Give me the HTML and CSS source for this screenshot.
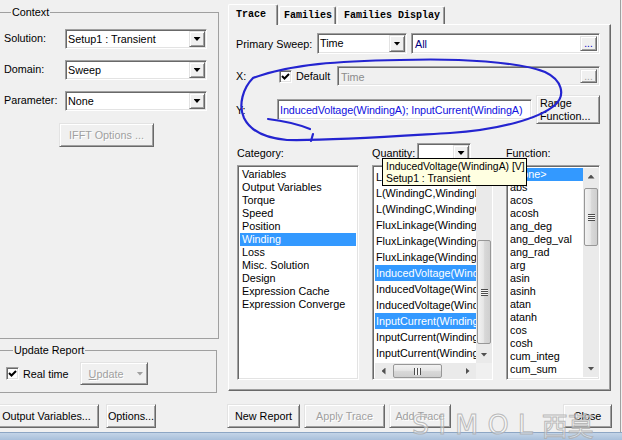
FILE: index.html
```html
<!DOCTYPE html>
<html lang="en">
<head>
    <meta charset="UTF-8">
    <meta name="viewport" content="width=device-width, initial-scale=1.0">
    <title>Report: Traces</title>
    <link rel="stylesheet" href="styles.css">
</head>
<body>
<div class="window">
    <div class="dialog">
        <div class="left-col">
            <fieldset class="group context-group">
                <legend>Context</legend>
                <div class="form-grid">
                    <span>Solution:</span>
                    <div class="combo sunken"><span class="combo-text">Setup1 : Transient</span><span class="drop-btn raised"></span></div>
                    <span>Domain:</span>
                    <div class="combo sunken"><span class="combo-text">Sweep</span><span class="drop-btn raised"></span></div>
                    <span>Parameter:</span>
                    <div class="combo sunken"><span class="combo-text">None</span><span class="drop-btn raised"></span></div>
                </div>
                <button class="btn raised ifft-btn" disabled>IFFT Options ...</button>
            </fieldset>

            <fieldset class="group update-group">
                <legend>Update Report</legend>
                <div class="update-row">
                    <span class="checkbox sunken"><svg width="9" height="9" viewBox="0 0 9 9"><polyline points="1,4 3.5,6.5 8,2" fill="none" stroke="#000" stroke-width="2"/></svg></span>
                    <span class="check-label">Real time</span>
                    <button class="btn raised update-btn" disabled><span><u>U</u>pdate</span><span class="arrow-down grey"></span></button>
                </div>
            </fieldset>

            <div class="left-buttons">
                <button class="btn raised output-btn">Output Variables...</button>
                <button class="btn raised options-btn">Options...</button>
            </div>
        </div>

        <div class="right-col">
            <div class="tabs">
                <div class="tab tab-active">Trace</div>
                <div class="tab tab-families">Families</div>
                <div class="tab tab-display">Families Display</div>
            </div>

            <div class="tab-panel">
                <div class="row sweep-row">
                    <span class="sweep-label">Primary Sweep:</span>
                    <div class="combo sunken sweep-combo"><span class="combo-text">Time</span><span class="drop-btn raised"></span></div>
                    <div class="field sunken all-field"><span class="field-text navy">All</span><span class="dots-btn raised">...</span></div>
                </div>

                <div class="row x-row">
                    <span class="x-label">X:</span>
                    <span class="checkbox sunken"><svg width="9" height="9" viewBox="0 0 9 9"><polyline points="1,4 3.5,6.5 8,2" fill="none" stroke="#000" stroke-width="2"/></svg></span>
                    <span class="check-label">Default</span>
                    <div class="field sunken field-disabled x-field"><span class="field-text">Time</span><span class="dots-btn raised dots-disabled">...</span></div>
                </div>

                <div class="row y-row">
                    <span class="y-label">Y:</span>
                    <div class="field sunken y-field"><span class="field-text blue">InducedVoltage(WindingA); InputCurrent(WindingA)</span></div>
                    <button class="btn raised range-btn">Range<br>Function...</button>
                </div>

                <div class="lists">
                    <div class="list-col category-col">
                        <div class="list-head">Category:</div>
                        <div class="list sunken">
                            <div class="items">
                                <div class="item">Variables</div>
                                <div class="item">Output Variables</div>
                                <div class="item">Torque</div>
                                <div class="item">Speed</div>
                                <div class="item">Position</div>
                                <div class="item selected">Winding</div>
                                <div class="item">Loss</div>
                                <div class="item">Misc. Solution</div>
                                <div class="item">Design</div>
                                <div class="item">Expression Cache</div>
                                <div class="item">Expression Converge</div>
                            </div>
                        </div>
                    </div>

                    <div class="list-col quantity-col">
                        <div class="list-head">
                            <span class="quantity-label">Quantity:</span>
                            <div class="combo sunken quantity-combo"><span class="combo-text"></span><span class="drop-btn raised"></span></div>
                        </div>
                        <div class="list sunken quantity-list">
                            <div class="items tall-items">
                                <div class="item">L(WindingC,WindingA)</div>
                                <div class="item">L(WindingC,WindingB)</div>
                                <div class="item">L(WindingC,WindingC)</div>
                                <div class="item">FluxLinkage(WindingA)</div>
                                <div class="item">FluxLinkage(WindingB)</div>
                                <div class="item">FluxLinkage(WindingC)</div>
                                <div class="item selected">InducedVoltage(WindingA)</div>
                                <div class="item">InducedVoltage(WindingB)</div>
                                <div class="item">InducedVoltage(WindingC)</div>
                                <div class="item selected">InputCurrent(WindingA)</div>
                                <div class="item">InputCurrent(WindingB)</div>
                                <div class="item">InputCurrent(WindingC)</div>
                            </div>
                            <div class="vscroll">
                                <span class="sb-btn"><span class="arrow-up"></span></span>
                                <span class="sb-gap q-gap"></span>
                                <span class="thumb q-thumb"><span class="grip"></span></span>
                                <span class="sb-fill"></span>
                                <span class="sb-btn"><span class="arrow-down"></span></span>
                            </div>
                            <div class="hscroll">
                                <span class="sb-btn"><span class="arrow-left"></span></span>
                                <span class="thumb h-thumb"><span class="grip-v"></span></span>
                                <span class="sb-fill"></span>
                                <span class="sb-btn"><span class="arrow-right"></span></span>
                            </div>
                            <div class="sb-corner"></div>
                        </div>
                    </div>

                    <div class="list-col function-col">
                        <div class="list-head">Function:</div>
                        <div class="list sunken function-list">
                            <div class="items">
                                <div class="item selected">&lt;none&gt;</div>
                                <div class="item">abs</div>
                                <div class="item">acos</div>
                                <div class="item">acosh</div>
                                <div class="item">ang_deg</div>
                                <div class="item">ang_deg_val</div>
                                <div class="item">ang_rad</div>
                                <div class="item">arg</div>
                                <div class="item">asin</div>
                                <div class="item">asinh</div>
                                <div class="item">atan</div>
                                <div class="item">atanh</div>
                                <div class="item">cos</div>
                                <div class="item">cosh</div>
                                <div class="item">cum_integ</div>
                                <div class="item">cum_sum</div>
                                <div class="item">dB</div>
                            </div>
                            <div class="vscroll">
                                <span class="sb-btn"><span class="arrow-up"></span></span>
                                <span class="sb-gap f-gap"></span>
                                <span class="thumb f-thumb"><span class="grip"></span></span>
                                <span class="sb-fill"></span>
                                <span class="sb-btn"><span class="arrow-down"></span></span>
                            </div>
                        </div>
                    </div>
                </div>
            </div>

            <div class="bottom-buttons">
                <button class="btn raised new-btn">New Report</button>
                <button class="btn raised apply-btn" disabled>Apply Trace</button>
                <button class="btn raised add-btn" disabled>Add Trace</button>
                <button class="btn raised close-btn">Close</button>
            </div>
        </div>

        <div class="frame-right"></div>
    </div>
    <div class="frame-bottom"></div>

    <div class="tooltip">
        <div>InducedVoltage(WindingA) [V]</div>
        <div>Setup1 : Transient</div>
    </div>

    <svg class="ink" width="622" height="440" viewBox="0 0 622 440">
        <path d="M 253 78 C 243 88, 238 105, 244 118 C 250 130, 262 138, 287 140 C 330 141, 400 136, 450 133 C 500 130, 540 118, 555 105 C 566 95, 562 80, 545 72 C 520 62, 460 58, 400 60 C 340 61, 290 64, 253 78" />
        <path d="M 268 119 C 285 121, 300 125, 310 129" />
        <path d="M 311 141 L 313 134" />
    </svg>

    <div class="watermark"><span class="wm-latin">SIMOL</span><span class="wm-cjk">西莫</span></div>
</div>
</body>
</html>
```

FILE: styles.css
```css
* {
    box-sizing: border-box;
}
body {
    margin: 0;
    width: 622px;
    height: 440px;
    overflow: hidden;
    background-color: #f0f0f0;
    font-family: "Liberation Sans", Arial, sans-serif;
    font-size: 10.8px;
    color: #000;
}
.window {
    position: relative;
    display: flex;
    flex-direction: column;
    height: 440px;
}
.dialog {
    display: flex;
    height: 432px;
}
.frame-bottom {
    height: 8px;
    background: linear-gradient(#c3d4e7, #a9c0db);
    border-top: 1px solid #8da6c4;
}
.frame-right {
    width: 10px;
    border-right: 1px solid #a0a0a0;
}

/* 3D edges */
.sunken {
    border: 1px solid;
    border-color: #a0a0a0 #fff #fff #a0a0a0;
    box-shadow: inset 1px 1px 0 #696969, inset -1px -1px 0 #e3e3e3;
    background-color: #fff;
}
.raised {
    border: 1px solid;
    border-color: #e3e3e3 #696969 #696969 #e3e3e3;
    box-shadow: inset 1px 1px 0 #fff, inset -1px -1px 0 #a0a0a0;
    background-color: #f0f0f0;
}
.btn {
    font-family: inherit;
    font-size: inherit;
    color: #000;
    padding: 0;
    margin: 0;
    height: 24px;
}
.btn:disabled {
    color: #a0a0a0;
    text-shadow: 1px 1px 0 #fff;
}

/* group boxes */
.group {
    margin: 0;
    padding: 0;
    min-width: 0;
    border: 1px solid #a0a0a0;
}
.group legend {
    padding: 0 1px;
    margin-left: 7px;
    line-height: 13px;
}
.left-col {
    width: 234px;
    margin-left: -6px;
    display: flex;
    flex-direction: column;
}
.context-group {
    margin: 6px 0 0 1px;
    width: 224px;
    height: 333px;
    padding: 10px 0 0 8px;
}
.form-grid {
    display: grid;
    grid-template-columns: 61px 142px;
    grid-auto-rows: 20px;
    row-gap: 11px;
    align-items: center;
}
.form-grid > span {
    padding-bottom: 3px;
}
.combo {
    display: flex;
    height: 20px;
    padding: 1px;
}
.combo-text {
    flex: 1;
    line-height: 16px;
    padding-left: 1px;
    overflow: hidden;
    white-space: nowrap;
}
.drop-btn {
    width: 16px;
    display: flex;
    align-items: center;
    justify-content: center;
}
.drop-btn::after {
    content: "";
    width: 7px;
    height: 4px;
    background-color: #000;
    clip-path: polygon(0 0, 100% 0, 50% 100%);
}
.ifft-btn {
    margin: 12px 0 0 55px;
    width: 95px;
}
.update-group {
    margin: 5px 0 0 1px;
    width: 222px;
    height: 49px;
    padding: 5px 0 0 10px;
}
.update-row {
    display: flex;
    align-items: center;
}
.checkbox {
    width: 13px;
    height: 13px;
    display: flex;
    align-items: center;
    justify-content: center;
}
.check-label {
    margin-left: 4px;
}
.update-btn {
    margin-left: 11px;
    width: 68px;
    height: 23px;
    display: flex;
    align-items: center;
    padding-left: 8px;
    gap: 13px;
}
.arrow-down.grey {
    background-color: #a0a0a0;
}
.left-buttons {
    display: flex;
    gap: 7px;
    margin-top: 11px;
}
.output-btn {
    width: 105px;
}
.options-btn {
    width: 50px;
}

/* right side */
.right-col {
    width: 383px;
    display: flex;
    flex-direction: column;
}
.tabs {
    display: flex;
    align-items: flex-end;
    height: 25px;
    margin-bottom: -1px;
    position: relative;
    z-index: 1;
}
.tab {
    font-family: "Liberation Mono", "DejaVu Sans Mono", monospace;
    font-weight: bold;
    font-size: 10px;
    height: 18px;
    margin-bottom: 1px;
    display: flex;
    align-items: center;
    border: 1px solid;
    border-bottom: none;
    border-color: #fff #696969 #696969 #fff;
    border-radius: 2px 2px 0 0;
    box-shadow: inset -1px 0 0 #a0a0a0;
    background-color: #f0f0f0;
}
.tab-active {
    width: 50px;
    height: 21px;
    margin-bottom: 0;
    padding: 0 0 2px 7px;
}
.tab-families {
    width: 57px;
    margin-left: 1px;
    padding-left: 4px;
}
.tab-display {
    width: 108px;
    margin-left: 1px;
    padding-left: 6px;
}
.tab-panel {
    height: 367px;
    border: 1px solid;
    border-color: #fff #696969 #696969 #fff;
    box-shadow: inset -1px -1px 0 #a0a0a0;
    padding: 8px 10px 0 7px;
}
.row {
    display: flex;
    align-items: center;
}
.sweep-row {
    height: 21px;
}
.sweep-label {
    width: 81px;
}
.sweep-combo {
    width: 90px;
    height: 21px;
}
.field {
    display: flex;
    height: 21px;
    padding: 2px;
}
.field-text {
    flex: 1;
    line-height: 17px;
    padding-left: 1px;
    white-space: nowrap;
    overflow: hidden;
}
.all-field {
    width: 189px;
    margin-left: 4px;
}
.navy {
    color: #000080;
}
.blue {
    color: #1010e0;
}
.dots-btn {
    width: 17px;
    color: #0000c0;
    font-size: 10px;
    line-height: 13px;
    text-align: center;
}
.dots-disabled {
    color: #a0a0a0;
}
.x-row {
    height: 20px;
    margin-top: 12px;
}
.x-label {
    width: 43px;
}
.x-field {
    width: 263px;
    margin-left: auto;
    height: 20px;
}
.field-disabled {
    background-color: #f0f0f0;
    color: #8c8c8c;
}
.y-row {
    height: 29px;
    margin-top: 9px;
}
.y-label {
    width: 41px;
}
.y-field {
    width: 255px;
}
.y-field .field-text {
    padding-left: 0;
    letter-spacing: -0.1px;
}
.range-btn {
    width: 64px;
    height: 29px;
    margin-left: 4px;
    text-align: left;
    padding-left: 3px;
    line-height: 13px;
}

/* lists */
.lists {
    display: flex;
    margin-top: 19px;
}
.list-col {
    display: flex;
    flex-direction: column;
}
.category-col {
    width: 122px;
    margin-left: 1px;
}
.quantity-col {
    width: 121px;
    margin-left: 13px;
}
.function-col {
    width: 94px;
    margin-left: 13px;
}
.list-head {
    height: 20px;
    display: flex;
    align-items: center;
}
.quantity-label {
    width: 45px;
}
.quantity-combo {
    width: 54px;
    height: 20px;
}
.list {
    margin-top: 2px;
    height: 215px;
    padding: 2px;
    overflow: hidden;
}
.items {
    overflow: hidden;
    white-space: nowrap;
}
.item {
    line-height: 13px;
    padding-left: 2px;
}
.item.selected {
    background-color: #3399ff;
    color: #fff;
}
.quantity-list {
    display: grid;
    grid-template-columns: 101px 16px;
    grid-template-rows: 195px 16px;
}
.tall-items {
    padding-top: 1px;
}
.tall-items .item {
    line-height: 16px;
    padding-left: 1px;
}
.function-list {
    display: grid;
    grid-template-columns: 74px 16px;
}
.function-list .item {
    padding-left: 1px;
}

/* scroll bars */
.vscroll, .hscroll {
    display: flex;
    background-color: #eaeaea;
}
.vscroll {
    flex-direction: column;
}
.sb-btn {
    flex: 0 0 17px;
    display: flex;
    align-items: center;
    justify-content: center;
}
.sb-fill {
    flex: 1;
}
.q-gap {
    flex: 0 0 55px;
}
.f-gap {
    flex: 0 0 3px;
}
.thumb {
    border: 1px solid #979797;
    border-radius: 2px;
    display: flex;
    align-items: center;
    justify-content: center;
}
.vscroll .thumb {
    margin: 0 1px;
    background: linear-gradient(to right, #f2f2f2, #e6e6e6 45%, #d8d8d8 55%, #cfcfcf);
}
.q-thumb {
    flex: 0 0 104px;
}
.f-thumb {
    flex: 0 0 58px;
}
.h-thumb {
    flex: 0 0 49px;
    margin: 1px 0 1px 1px;
    background: linear-gradient(#f2f2f2, #e6e6e6 45%, #d8d8d8 55%, #cfcfcf);
}
.grip {
    width: 7px;
    height: 7px;
    background: repeating-linear-gradient(#4d4d4d 0 1px, #f6f6f6 1px 2px);
}
.grip-v {
    width: 7px;
    height: 7px;
    background: repeating-linear-gradient(to right, #4d4d4d 0 1px, #f6f6f6 1px 3px);
}
.arrow-up, .arrow-down {
    width: 7px;
    height: 4px;
    background-color: #505050;
}
.arrow-up {
    clip-path: polygon(50% 0, 100% 100%, 0 100%);
}
.arrow-down {
    clip-path: polygon(0 0, 100% 0, 50% 100%);
}
.arrow-left, .arrow-right {
    width: 4px;
    height: 7px;
    background-color: #505050;
}
.arrow-left {
    clip-path: polygon(100% 0, 100% 100%, 0 50%);
}
.arrow-right {
    clip-path: polygon(0 0, 100% 50%, 0 100%);
}
.sb-corner {
    background-color: #f0f0f0;
}

/* bottom buttons */
.bottom-buttons {
    display: flex;
    gap: 4px;
    margin-top: 13px;
    margin-left: -1px;
}
.new-btn {
    width: 73px;
}
.apply-btn {
    width: 81px;
}
.add-btn {
    width: 62px;
}
.close-btn {
    width: 49px;
    margin-left: auto;
    margin-right: -1px;
}

/* overlays */
.tooltip {
    position: absolute;
    left: 382px;
    top: 158px;
    width: 145px;
    height: 28px;
    padding: 2px 0 0 3px;
    background-color: #ffffe1;
    border: 1px solid #000;
    font-size: 10.4px;
    line-height: 12px;
    white-space: nowrap;
    overflow: hidden;
    z-index: 3;
}
.ink {
    position: absolute;
    left: 0;
    top: 0;
    pointer-events: none;
    z-index: 4;
}
.ink path {
    fill: none;
    stroke: #2424d0;
    stroke-width: 2.2;
    stroke-linecap: round;
}
.watermark {
    position: absolute;
    left: 412px;
    top: 406px;
    display: flex;
    align-items: center;
    pointer-events: none;
    z-index: 5;
}
.wm-latin {
    font-family: "DejaVu Sans", sans-serif;
    font-size: 27px;
    letter-spacing: 9px;
    color: rgba(255, 255, 255, 0.45);
    -webkit-text-stroke: 1px rgba(170, 170, 170, 0.8);
}
.wm-cjk {
    font-family: "Noto Sans CJK SC", sans-serif;
    font-size: 26px;
    color: rgba(255, 255, 255, 0.45);
    -webkit-text-stroke: 1px rgba(170, 170, 170, 0.8);
}
```
